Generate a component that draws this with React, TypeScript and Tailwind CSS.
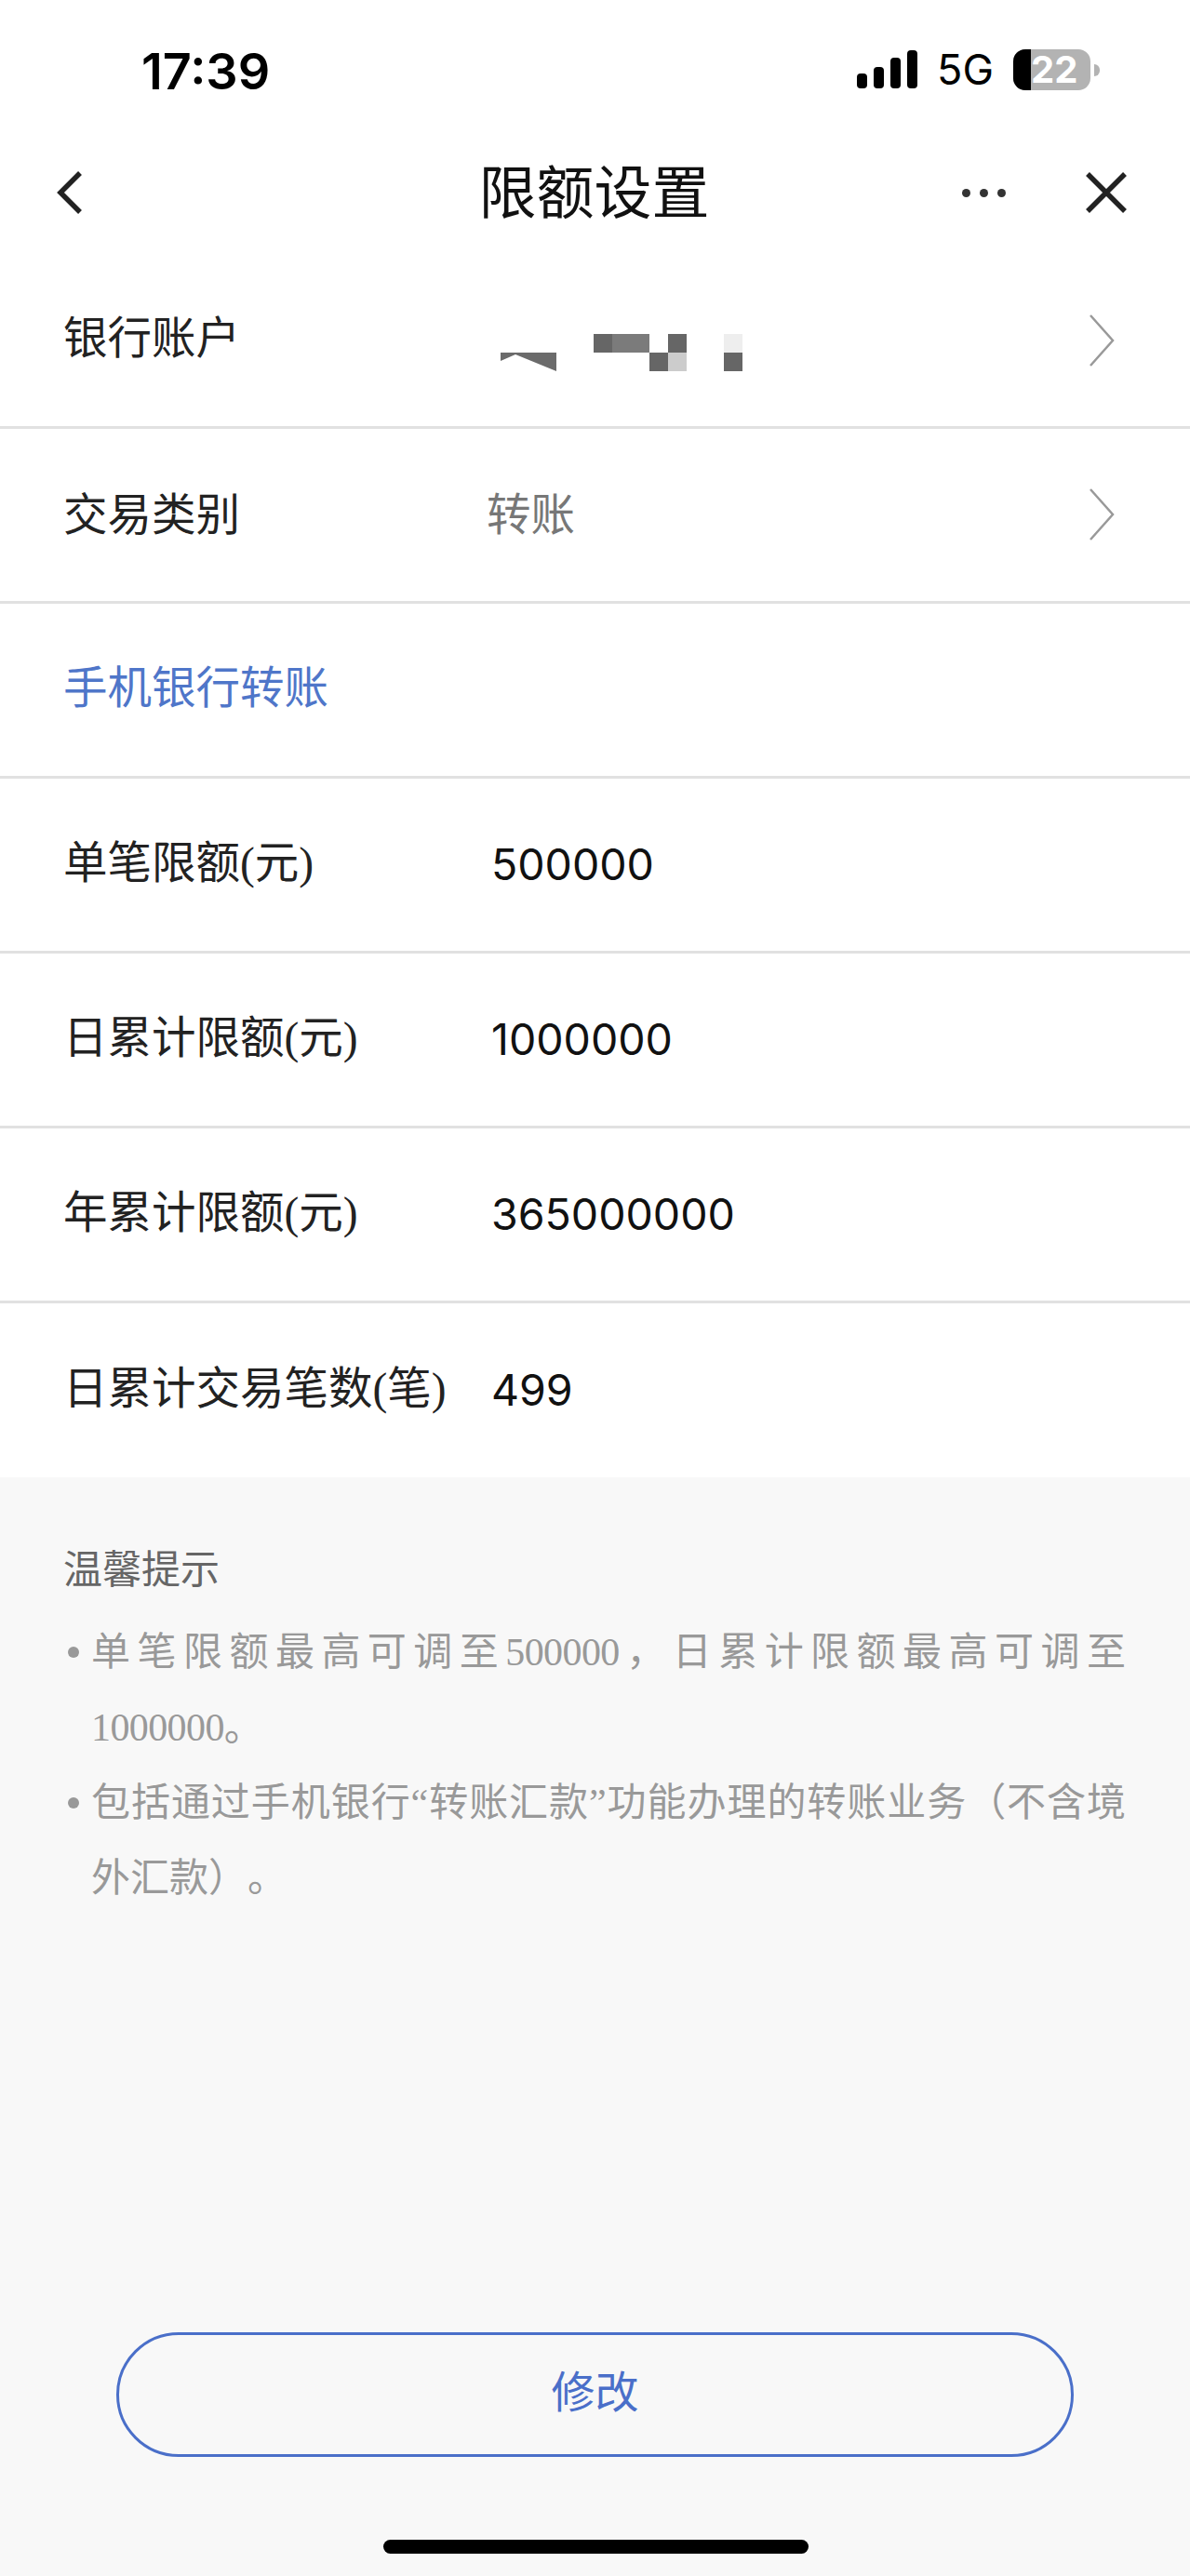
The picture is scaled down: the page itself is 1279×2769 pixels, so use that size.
const cjk = "font-['Inter','Noto_Sans_CJK_SC',sans-serif]"

function Row({ label, value, blue }: { label: string; value?: string; blue?: boolean }) {
    return (
        <div className="flex h-[188px] items-center border-b-[3px] border-[#e1e1e1] pl-[68px]">
            <div className={`w-[460px] pb-[2px] font-['Liberation_Serif','Noto_Sans_CJK_SC',serif] text-[47.5px] ${blue ? 'text-[#4f76c9]' : 'text-[#222222]'}`}>{label}</div>
            {value && <div className={`${cjk} text-[46.5px] text-[#111111]`}>{value}</div>}
        </div>
    )
}

function Chevron() {
    return (
        <svg width="28" height="56" viewBox="0 0 28 56" fill="none" className="shrink-0">
            <path d="M2 1L26 28L2 55" stroke="#999999" strokeWidth="2.5" />
        </svg>
    )
}

export default function App() {
    return (
        <div className={`flex h-[2769px] w-[1279px] flex-col overflow-hidden bg-white ${cjk}`}>
            {/* Status bar */}
            <div className="flex h-[139px] items-start justify-between pl-[152px] pr-[97px] pt-[51px]">
                <div className="text-[54px] leading-[52px] font-semibold text-black">17:39</div>
                <div className="flex items-center pt-[2px]">
                    <svg width="66" height="42" viewBox="0 0 66 42" fill="black">
                        <rect x="0" y="25" width="11" height="16" rx="4" />
                        <rect x="18" y="18" width="11" height="23" rx="4" />
                        <rect x="36" y="8" width="11" height="33" rx="4" />
                        <rect x="54" y="0" width="11" height="41" rx="4" />
                    </svg>
                    <div className="ml-[20px] text-[45px] leading-[42px] font-normal text-black">5G</div>
                    <div className="ml-[21px] flex h-[44px] w-[83px] rounded-[13px] bg-[#b3b3b3]">
                        <div className="h-full w-[19px] rounded-l-[13px] bg-black" />
                        <div className="w-[50px] text-center text-[40px] leading-[44px] font-bold text-white">22</div>
                    </div>
                    <div className="ml-[4px] h-[13px] w-[6px] rounded-r-full bg-[#b3b3b3]" />
                </div>
            </div>

            {/* Nav */}
            <div className="relative flex h-[136px] items-center justify-between pl-[61px] pr-[68px]">
                <svg width="28" height="46" viewBox="0 0 28 46" fill="none">
                    <path d="M25 2L4 23L25 44" stroke="#222222" strokeWidth="5.5" />
                </svg>
                <div className="absolute inset-x-0 pr-[2px] text-center text-[62px] text-[#111111]">限额设置</div>
                <div className="flex items-center gap-[86px]">
                    <div className="flex gap-[10px]">
                        <div className="size-[9px] rounded-full bg-[#333333]" />
                        <div className="size-[9px] rounded-full bg-[#333333]" />
                        <div className="size-[9px] rounded-full bg-[#333333]" />
                    </div>
                    <svg width="44" height="44" viewBox="0 0 44 44" fill="none">
                        <path d="M2 2L42 42M42 2L2 42" stroke="#222222" strokeWidth="5.5" />
                    </svg>
                </div>
            </div>

            {/* Account */}
            <div className="flex h-[186px] items-center border-b-[3px] border-[#e1e1e1] pl-[68px] pr-[81px]">
                <div className="-mt-[8px] w-[470px] text-[47.5px] text-[#222222]">银行账户</div>
                {/* blurred account number */}
                <svg width="260" height="40" viewBox="0 0 260 40" className="mt-[24px]">
                    <polygon points="0,20 60,20 60,40 16,22 0,29" fill="#6b6b6b" />
                    <rect x="100" y="0" width="20" height="20" fill="#666666" />
                    <rect x="120" y="0" width="40" height="20" fill="#7b7b7b" />
                    <rect x="160" y="20" width="20" height="20" fill="#666666" />
                    <rect x="180" y="0" width="20" height="20" fill="#666666" />
                    <rect x="180" y="20" width="20" height="20" fill="#cccccc" />
                    <rect x="240" y="0" width="20" height="20" fill="#eeeeee" />
                    <rect x="240" y="20" width="20" height="20" fill="#666666" />
                </svg>
                <div className="-mt-[2px] ml-auto">
                    <Chevron />
                </div>
            </div>

            {/* Transaction type */}
            <div className="flex h-[188px] items-center justify-between border-b-[3px] border-[#e1e1e1] pl-[68px] pr-[81px]">
                <div className="flex items-center pb-[2px]">
                    <div className="w-[455px] text-[47.5px] text-[#222222]">交易类别</div>
                    <div className="text-[47.5px] text-[#777777]">转账</div>
                </div>
                <div className="-mt-[2px]">
                    <Chevron />
                </div>
            </div>

            <Row label="手机银行转账" blue />
            <Row label="单笔限额(元)" value="500000" />
            <Row label="日累计限额(元)" value="1000000" />
            <Row label="年累计限额(元)" value="365000000" />
            <div className="flex h-[187px] items-center pl-[68px]">
                <div className="w-[460px] pb-[2px] font-['Liberation_Serif','Noto_Sans_CJK_SC',serif] text-[47.5px] whitespace-nowrap text-[#222222]">日累计交易笔数(笔)</div>
                <div className="text-[46.5px] text-[#111111]">499</div>
            </div>

            {/* Tips */}
            <div className="flex flex-1 flex-col bg-[#f8f8f8] pl-[68px] pr-[69px] pt-[72px] font-['Liberation_Serif','Noto_Sans_CJK_SC',serif]">
                <div className="text-[42px] leading-[56px] text-[#666666]">温馨提示</div>
                <div className="mt-[20px] text-[42px] leading-[81px] text-[#999999] [text-spacing-trim:space-all]">
                    <div className="relative pl-[30px] text-justify">
                        <span className="absolute left-[5px] top-[34px] size-[12px] rounded-full bg-[#999999]" />
                        单笔限额最高可调至<span className="tracking-[-0.6px]">500000</span>，日累计限额最高可调至<span className="tracking-[-0.6px]">1000000</span>。
                    </div>
                    <div className="relative pl-[30px] text-justify">
                        <span className="absolute left-[5px] top-[34px] size-[12px] rounded-full bg-[#999999]" />
                        包括通过手机银行“转账汇款”功能办理的转账业务（不含境外汇款）。
                    </div>
                </div>

                <div className="mt-auto ml-[57px] flex h-[134px] w-[1029px] items-center justify-center rounded-[67px] border-[3px] border-[#4a6fc9] pb-[3px] text-[47px] text-[#4a6fc9]">
                    修改
                </div>
                <div className="mt-[89px] mb-[24px] ml-[344px] h-[15px] w-[457px] rounded-full bg-black" />
            </div>
        </div>
    )
}
